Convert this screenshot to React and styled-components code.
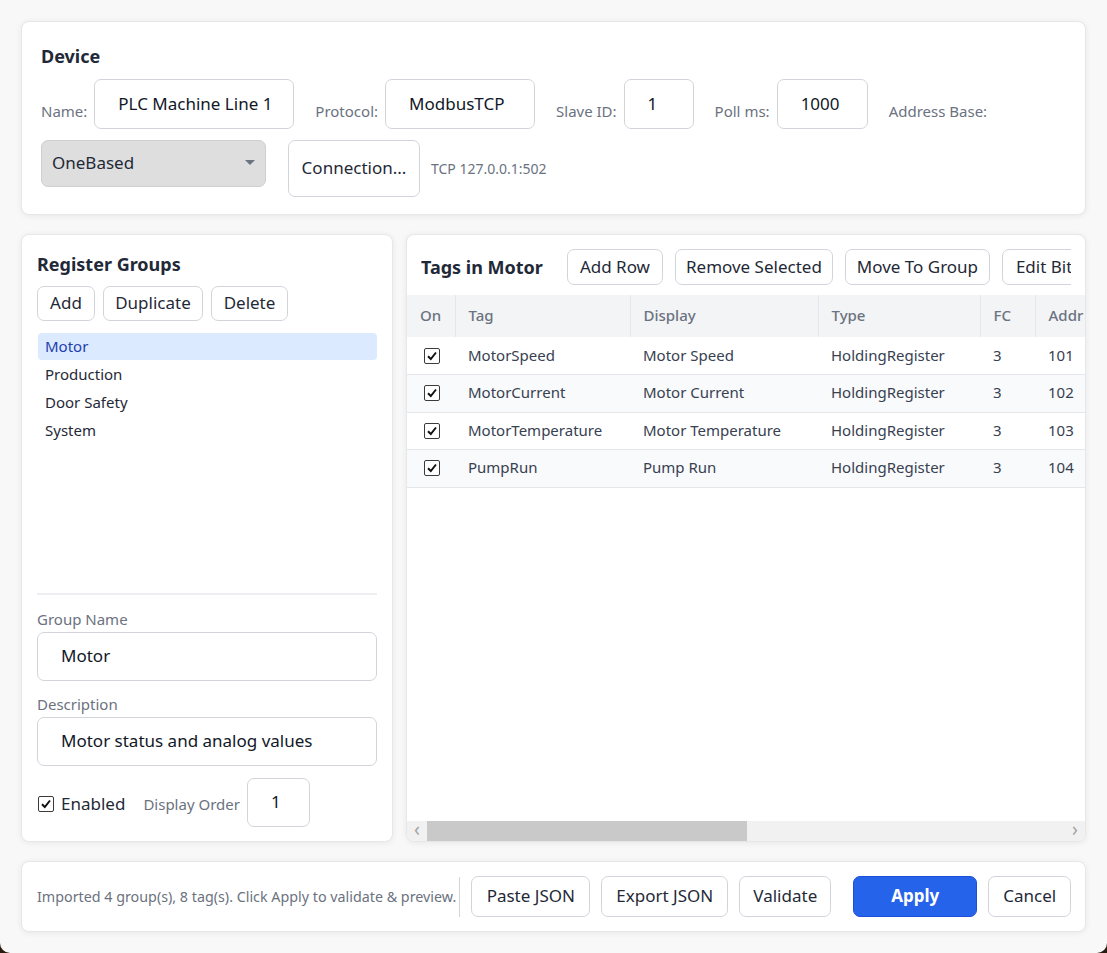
import React from 'react';
import styled, { createGlobalStyle } from 'styled-components';

const Global = createGlobalStyle`
  html, body { margin: 0; padding: 0; background: #2a1c0e; }
  body { font-family: "Noto Sans", "Open Sans", sans-serif; color: #1f2937; }
  * { box-sizing: border-box; }
`;

const Window = styled.div`
  width: 1107px;
  height: 953px;
  background: #f8f8f9;
  border-radius: 0 0 10px 10px;
  padding: 21px;
  display: flex;
  flex-direction: column;
  gap: 19px;
  overflow: hidden;
`;

const Card = styled.section`
  background: #fff;
  border: 1px solid #e5e7eb;
  border-radius: 8px;
  box-shadow: 0 1px 6px rgba(0, 0, 0, 0.07);
`;

const DeviceCard = styled(Card)`
  height: 194px;
  padding: 22px 19px 0 19px;
  display: flex;
  flex-direction: column;
`;

const Title = styled.h2`
  margin: 0;
  font-size: 18px;
  line-height: 24px;
  font-weight: 700;
  color: #1f2937;
`;

const FieldRow = styled.div`
  display: flex;
  align-items: ${p => p.$align || 'center'};
  margin-top: ${p => p.$mt || 0}px;
`;

const Field = styled.div`
  display: flex;
  align-items: center;
  gap: 7px;
  margin-right: 21px;
`;

const InlineLabel = styled.span`
  font-size: 15px;
  color: #6b7280;
  margin-top: 14px;
  white-space: nowrap;
`;

const TextBox = styled.div`
  width: ${p => p.$w}px;
  height: ${p => p.$h || 50}px;
  border: 1px solid #d1d5db;
  border-radius: 7px;
  background: #fff;
  padding: 0 0 2px 23px;
  display: flex;
  align-items: center;
  font-size: 17px;
  color: #111827;
  white-space: nowrap;
`;

const Select = styled.div`
  width: 225px;
  height: 47px;
  background: #dedede;
  border: 1px solid #cfcfd3;
  border-radius: 7px;
  display: flex;
  align-items: center;
  justify-content: space-between;
  padding: 0 10px 2px 10px;
  font-size: 17px;
  color: #1f2937;
`;

const Caret = styled.span`
  width: 0;
  height: 0;
  border-left: 5px solid transparent;
  border-right: 5px solid transparent;
  border-top: 5px solid #6b7280;
`;

const Button = styled.button`
  font-family: inherit;
  height: ${p => p.$h || 36}px;
  width: ${p => (p.$w ? `${p.$w}px` : 'auto')};
  padding: 0 ${p => p.$px ?? 12}px 2px;
  border: 1px solid #d1d5db;
  border-radius: 7px;
  background: #fff;
  color: #1f2937;
  font-size: 17px;
  white-space: nowrap;
  flex-shrink: 0;
  cursor: pointer;
`;

const PrimaryButton = styled(Button)`
  background: #2563eb;
  border-color: #1d4ed8;
  color: #fff;
  font-weight: 700;
`;

const ConnectionButton = styled(Button)`
  margin-left: 22px;
`;

const Hint = styled.span`
  font-size: 14px;
  color: #6b7280;
  align-self: center;
  margin-left: 11px;
`;

const Main = styled.div`
  display: flex;
  gap: 13px;
  height: 608px;
`;

const GroupsCard = styled(Card)`
  width: 372px;
  padding: 17px 15px 14px 15px;
  display: flex;
  flex-direction: column;
`;

const ButtonRow = styled.div`
  display: flex;
  gap: 8px;
  margin-top: ${p => p.$mt || 0}px;
`;

const List = styled.ul`
  list-style: none;
  margin: 12px 0 0 0;
  padding: 0 0 0 1px;
  flex: 1;
  display: flex;
  flex-direction: column;
  gap: 1px;
`;

const ListItem = styled.li`
  height: 27px;
  line-height: 26px;
  padding-left: 7px;
  font-size: 15px;
  border-radius: 4px;
  background: ${p => (p.$active ? '#dbeafe' : 'transparent')};
  color: ${p => (p.$active ? '#1e40af' : '#1f2937')};
`;

const Divider = styled.hr`
  border: 0;
  border-top: 2px solid #eceef1;
  margin: 0 0 14px 0;
`;

const StackLabel = styled.div`
  font-size: 15px;
  line-height: 20px;
  color: #6b7280;
  margin-top: ${p => p.$mt || 0}px;
`;

const FullBox = styled(TextBox)`
  width: 100%;
  height: 49px;
  margin-top: 3px;
`;

const BottomRow = styled.div`
  display: flex;
  align-items: center;
  margin-top: 12px;
`;

const CheckLabel = styled.label`
  display: flex;
  align-items: center;
  gap: 7px;
  font-size: 17px;
  color: #1f2937;
  margin-left: 1px;
  margin-top: 2px;
`;

const SmallLabel = styled.span`
  font-size: 15px;
  color: #6b7280;
  margin-left: 18px;
  margin-right: 7px;
  margin-top: 2px;
`;

const Box = styled.span`
  width: 16px;
  height: 16px;
  border: 1px solid #3b3b3b;
  border-radius: 2px;
  background: #fff;
  display: inline-flex;
  align-items: center;
  justify-content: center;
  flex-shrink: 0;
`;

const Check = () => (
  <Box>
    <svg width="12" height="12" viewBox="0 0 12 12">
      <path d="M2 6.2 L4.8 9 L10 2.5" fill="none" stroke="#111" strokeWidth="2" />
    </svg>
  </Box>
);

const TagsCard = styled(Card)`
  flex: 1;
  display: flex;
  flex-direction: column;
  overflow: hidden;
`;

const TagsHeader = styled.div`
  padding: 14px 14px 0 14px;
`;

const TagsHeaderInner = styled.div`
  display: flex;
  align-items: center;
  gap: 12px;
  overflow: hidden;
  height: 36px;
`;

const TagsTitle = styled(Title)`
  margin-right: 12px;
  flex-shrink: 0;
`;

const TableArea = styled.div`
  flex: 1;
  margin-top: 10px;
  overflow: hidden;
  display: flex;
  flex-direction: column;
`;

const TableClip = styled.div`
  flex: 1;
  overflow: hidden;
`;

const Table = styled.table`
  border-collapse: collapse;
  table-layout: fixed;
  width: ${p => p.$w}px;
  font-size: 15px;
`;

const Th = styled.th`
  width: ${p => p.$w}px;
  height: 42px;
  background: #f3f4f6;
  color: #6b7280;
  font-weight: 500;
  text-align: left;
  padding: 0 0 2px 13px;
  border-right: 1px solid #e5e7eb;
  white-space: nowrap;
`;

const Tr = styled.tr`
  background: ${p => (p.$alt ? '#f9fafb' : '#fff')};
  border-bottom: 1px solid #e5e7eb;
`;

const Td = styled.td`
  height: 37.5px;
  padding: 0 0 2px 13px;
  color: #374151;
  white-space: nowrap;
  overflow: hidden;
`;

const CheckCell = styled(Td)`
  padding: 0 0 0 17px;
  line-height: 0;
`;

const Scrollbar = styled.div`
  height: 20px;
  background: #f1f1f1;
  display: flex;
  align-items: stretch;
`;

const ScrollArrow = styled.div`
  width: 20px;
  display: flex;
  align-items: center;
  justify-content: center;
  color: #a3a3a3;
  font-size: 19px;
  line-height: 1;
  padding-bottom: 3px;
`;

const Thumb = styled.div`
  width: 320px;
  background: #c9c9c9;
`;

const Spacer = styled.div`
  flex: 1;
`;

const Footer = styled(Card)`
  height: 71px;
  display: flex;
  align-items: center;
  padding: 0 15px 0 15px;
  gap: 11px;
`;

const Status = styled.span`
  font-size: 14.3px;
  color: #6b7280;
  white-space: nowrap;
`;

const Sliver = styled.span`
  width: 5px;
  height: 40px;
  margin-left: -8px;
  border: 1px solid #d1d5db;
  border-left: 0;
  border-radius: 0 7px 7px 0;
`;

const FooterSpacer = styled.span`
  width: 10px;
`;

const groups = ['Motor', 'Production', 'Door Safety', 'System'];

const columns = [
  ['On', 48],
  ['Tag', 175],
  ['Display', 188],
  ['Type', 162],
  ['FC', 55],
  ['Addr', 80],
];

const tableWidth = columns.reduce((s, c) => s + c[1], 0);

const rows = [
  ['MotorSpeed', 'Motor Speed', 'HoldingRegister', '3', '101'],
  ['MotorCurrent', 'Motor Current', 'HoldingRegister', '3', '102'],
  ['MotorTemperature', 'Motor Temperature', 'HoldingRegister', '3', '103'],
  ['PumpRun', 'Pump Run', 'HoldingRegister', '3', '104'],
];

export default function App() {
  return (
    <>
      <Global />
      <Window>
        <DeviceCard>
          <Title>Device</Title>
          <FieldRow $mt={11}>
            <Field>
              <InlineLabel>Name:</InlineLabel>
              <TextBox $w={200}>PLC Machine Line 1</TextBox>
            </Field>
            <Field>
              <InlineLabel>Protocol:</InlineLabel>
              <TextBox $w={150}>ModbusTCP</TextBox>
            </Field>
            <Field>
              <InlineLabel>Slave ID:</InlineLabel>
              <TextBox $w={70}>1</TextBox>
            </Field>
            <Field>
              <InlineLabel>Poll ms:</InlineLabel>
              <TextBox $w={91}>1000</TextBox>
            </Field>
            <Field>
              <InlineLabel>Address Base:</InlineLabel>
            </Field>
          </FieldRow>
          <FieldRow $mt={11} $align="flex-start">
            <Select>
              OneBased
              <Caret />
            </Select>
            <ConnectionButton $h={57} $w={132} $px={0}>Connection...</ConnectionButton>
            <Hint>TCP 127.0.0.1:502</Hint>
          </FieldRow>
        </DeviceCard>

        <Main>
          <GroupsCard>
            <Title>Register Groups</Title>
            <ButtonRow $mt={10}>
              <Button $h={35} $w={58} $px={0}>Add</Button>
              <Button $h={35} $w={100} $px={0}>Duplicate</Button>
              <Button $h={35} $w={77} $px={0}>Delete</Button>
            </ButtonRow>
            <List>
              {groups.map((g, i) => (
                <ListItem key={g} $active={i === 0}>{g}</ListItem>
              ))}
            </List>
            <Divider />
            <StackLabel>Group Name</StackLabel>
            <FullBox>Motor</FullBox>
            <StackLabel $mt={13}>Description</StackLabel>
            <FullBox>Motor status and analog values</FullBox>
            <BottomRow>
              <CheckLabel>
                <Check />
                Enabled
              </CheckLabel>
              <SmallLabel>Display Order</SmallLabel>
              <TextBox $w={63} $h={49}>1</TextBox>
            </BottomRow>
          </GroupsCard>

          <TagsCard>
            <TagsHeader>
              <TagsHeaderInner>
                <TagsTitle>Tags in Motor</TagsTitle>
                <Button $w={96} $px={0}>Add Row</Button>
                <Button $w={158} $px={0}>Remove Selected</Button>
                <Button $w={145} $px={0}>Move To Group</Button>
                <Button $px={13}>Edit Bits</Button>
              </TagsHeaderInner>
            </TagsHeader>
            <TableArea>
              <TableClip>
                <Table $w={tableWidth}>
                  <thead>
                    <tr>
                      {columns.map(([c, w]) => (
                        <Th key={c} $w={w}>{c}</Th>
                      ))}
                    </tr>
                  </thead>
                  <tbody>
                    {rows.map((r, i) => (
                      <Tr key={r[0]} $alt={i % 2 === 1}>
                        <CheckCell><Check /></CheckCell>
                        {r.map((v, j) => (
                          <Td key={j}>{v}</Td>
                        ))}
                      </Tr>
                    ))}
                  </tbody>
                </Table>
              </TableClip>
              <Scrollbar>
                <ScrollArrow>‹</ScrollArrow>
                <Thumb />
                <Spacer />
                <ScrollArrow>›</ScrollArrow>
              </Scrollbar>
            </TableArea>
          </TagsCard>
        </Main>

        <Footer>
          <Status>Imported 4 group(s), 8 tag(s). Click Apply to validate &amp; preview.</Status>
          <Sliver />
          <Button $h={41} $w={119} $px={0}>Paste JSON</Button>
          <Button $h={41} $w={127} $px={0}>Export JSON</Button>
          <Button $h={41} $w={92} $px={0}>Validate</Button>
          <FooterSpacer />
          <PrimaryButton $h={41} $w={124} $px={0}>Apply</PrimaryButton>
          <Button $h={41} $w={83} $px={0}>Cancel</Button>
        </Footer>
      </Window>
    </>
  );
}
